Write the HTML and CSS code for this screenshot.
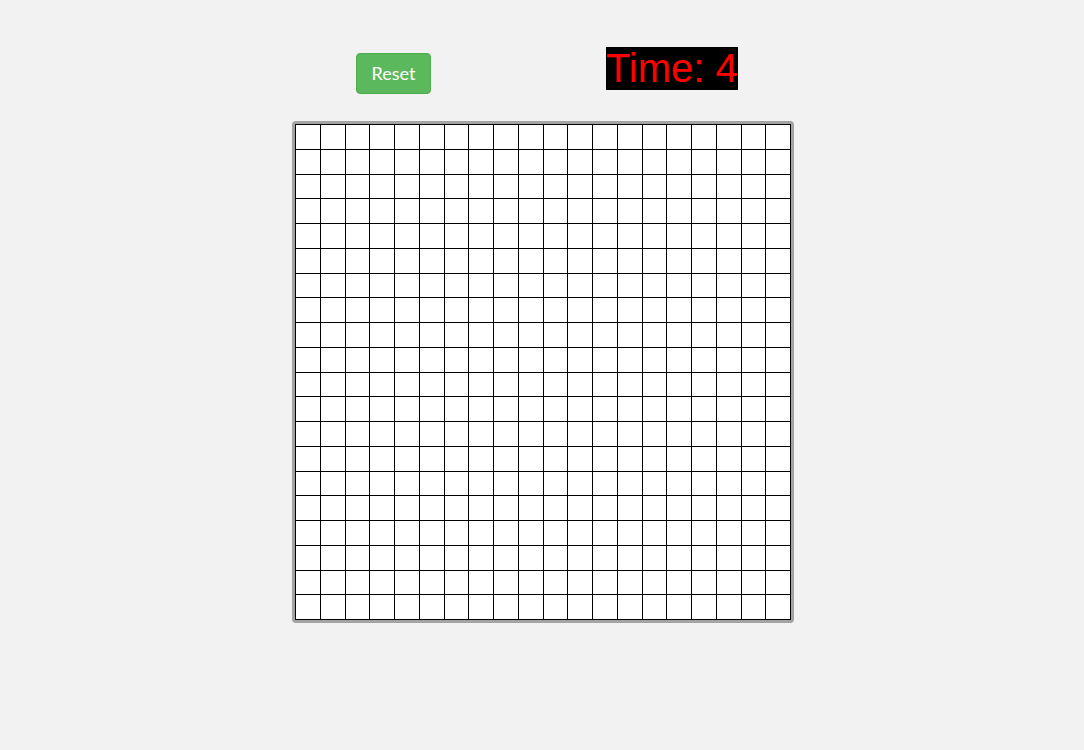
FILE: index.html
```html
<!DOCTYPE html>
<html>
<head>
<meta charset="utf-8">
<title>Grid</title>
<link rel="stylesheet" href="styles.css">
</head>
<body>
<div class="page">
  <div class="controls">
    <button class="reset-btn">Reset</button>
    <div class="timer">Time: 4</div>
  </div>
  <div class="board">
    <div class="grid">
      <span class="cell"></span><span class="cell"></span><span class="cell"></span><span class="cell"></span><span class="cell"></span><span class="cell"></span><span class="cell"></span><span class="cell"></span><span class="cell"></span><span class="cell"></span><span class="cell"></span><span class="cell"></span><span class="cell"></span><span class="cell"></span><span class="cell"></span><span class="cell"></span><span class="cell"></span><span class="cell"></span><span class="cell"></span><span class="cell"></span>
      <span class="cell"></span><span class="cell"></span><span class="cell"></span><span class="cell"></span><span class="cell"></span><span class="cell"></span><span class="cell"></span><span class="cell"></span><span class="cell"></span><span class="cell"></span><span class="cell"></span><span class="cell"></span><span class="cell"></span><span class="cell"></span><span class="cell"></span><span class="cell"></span><span class="cell"></span><span class="cell"></span><span class="cell"></span><span class="cell"></span>
      <span class="cell"></span><span class="cell"></span><span class="cell"></span><span class="cell"></span><span class="cell"></span><span class="cell"></span><span class="cell"></span><span class="cell"></span><span class="cell"></span><span class="cell"></span><span class="cell"></span><span class="cell"></span><span class="cell"></span><span class="cell"></span><span class="cell"></span><span class="cell"></span><span class="cell"></span><span class="cell"></span><span class="cell"></span><span class="cell"></span>
      <span class="cell"></span><span class="cell"></span><span class="cell"></span><span class="cell"></span><span class="cell"></span><span class="cell"></span><span class="cell"></span><span class="cell"></span><span class="cell"></span><span class="cell"></span><span class="cell"></span><span class="cell"></span><span class="cell"></span><span class="cell"></span><span class="cell"></span><span class="cell"></span><span class="cell"></span><span class="cell"></span><span class="cell"></span><span class="cell"></span>
      <span class="cell"></span><span class="cell"></span><span class="cell"></span><span class="cell"></span><span class="cell"></span><span class="cell"></span><span class="cell"></span><span class="cell"></span><span class="cell"></span><span class="cell"></span><span class="cell"></span><span class="cell"></span><span class="cell"></span><span class="cell"></span><span class="cell"></span><span class="cell"></span><span class="cell"></span><span class="cell"></span><span class="cell"></span><span class="cell"></span>
      <span class="cell"></span><span class="cell"></span><span class="cell"></span><span class="cell"></span><span class="cell"></span><span class="cell"></span><span class="cell"></span><span class="cell"></span><span class="cell"></span><span class="cell"></span><span class="cell"></span><span class="cell"></span><span class="cell"></span><span class="cell"></span><span class="cell"></span><span class="cell"></span><span class="cell"></span><span class="cell"></span><span class="cell"></span><span class="cell"></span>
      <span class="cell"></span><span class="cell"></span><span class="cell"></span><span class="cell"></span><span class="cell"></span><span class="cell"></span><span class="cell"></span><span class="cell"></span><span class="cell"></span><span class="cell"></span><span class="cell"></span><span class="cell"></span><span class="cell"></span><span class="cell"></span><span class="cell"></span><span class="cell"></span><span class="cell"></span><span class="cell"></span><span class="cell"></span><span class="cell"></span>
      <span class="cell"></span><span class="cell"></span><span class="cell"></span><span class="cell"></span><span class="cell"></span><span class="cell"></span><span class="cell"></span><span class="cell"></span><span class="cell"></span><span class="cell"></span><span class="cell"></span><span class="cell"></span><span class="cell"></span><span class="cell"></span><span class="cell"></span><span class="cell"></span><span class="cell"></span><span class="cell"></span><span class="cell"></span><span class="cell"></span>
      <span class="cell"></span><span class="cell"></span><span class="cell"></span><span class="cell"></span><span class="cell"></span><span class="cell"></span><span class="cell"></span><span class="cell"></span><span class="cell"></span><span class="cell"></span><span class="cell"></span><span class="cell"></span><span class="cell"></span><span class="cell"></span><span class="cell"></span><span class="cell"></span><span class="cell"></span><span class="cell"></span><span class="cell"></span><span class="cell"></span>
      <span class="cell"></span><span class="cell"></span><span class="cell"></span><span class="cell"></span><span class="cell"></span><span class="cell"></span><span class="cell"></span><span class="cell"></span><span class="cell"></span><span class="cell"></span><span class="cell"></span><span class="cell"></span><span class="cell"></span><span class="cell"></span><span class="cell"></span><span class="cell"></span><span class="cell"></span><span class="cell"></span><span class="cell"></span><span class="cell"></span>
      <span class="cell"></span><span class="cell"></span><span class="cell"></span><span class="cell"></span><span class="cell"></span><span class="cell"></span><span class="cell"></span><span class="cell"></span><span class="cell"></span><span class="cell"></span><span class="cell"></span><span class="cell"></span><span class="cell"></span><span class="cell"></span><span class="cell"></span><span class="cell"></span><span class="cell"></span><span class="cell"></span><span class="cell"></span><span class="cell"></span>
      <span class="cell"></span><span class="cell"></span><span class="cell"></span><span class="cell"></span><span class="cell"></span><span class="cell"></span><span class="cell"></span><span class="cell"></span><span class="cell"></span><span class="cell"></span><span class="cell"></span><span class="cell"></span><span class="cell"></span><span class="cell"></span><span class="cell"></span><span class="cell"></span><span class="cell"></span><span class="cell"></span><span class="cell"></span><span class="cell"></span>
      <span class="cell"></span><span class="cell"></span><span class="cell"></span><span class="cell"></span><span class="cell"></span><span class="cell"></span><span class="cell"></span><span class="cell"></span><span class="cell"></span><span class="cell"></span><span class="cell"></span><span class="cell"></span><span class="cell"></span><span class="cell"></span><span class="cell"></span><span class="cell"></span><span class="cell"></span><span class="cell"></span><span class="cell"></span><span class="cell"></span>
      <span class="cell"></span><span class="cell"></span><span class="cell"></span><span class="cell"></span><span class="cell"></span><span class="cell"></span><span class="cell"></span><span class="cell"></span><span class="cell"></span><span class="cell"></span><span class="cell"></span><span class="cell"></span><span class="cell"></span><span class="cell"></span><span class="cell"></span><span class="cell"></span><span class="cell"></span><span class="cell"></span><span class="cell"></span><span class="cell"></span>
      <span class="cell"></span><span class="cell"></span><span class="cell"></span><span class="cell"></span><span class="cell"></span><span class="cell"></span><span class="cell"></span><span class="cell"></span><span class="cell"></span><span class="cell"></span><span class="cell"></span><span class="cell"></span><span class="cell"></span><span class="cell"></span><span class="cell"></span><span class="cell"></span><span class="cell"></span><span class="cell"></span><span class="cell"></span><span class="cell"></span>
      <span class="cell"></span><span class="cell"></span><span class="cell"></span><span class="cell"></span><span class="cell"></span><span class="cell"></span><span class="cell"></span><span class="cell"></span><span class="cell"></span><span class="cell"></span><span class="cell"></span><span class="cell"></span><span class="cell"></span><span class="cell"></span><span class="cell"></span><span class="cell"></span><span class="cell"></span><span class="cell"></span><span class="cell"></span><span class="cell"></span>
      <span class="cell"></span><span class="cell"></span><span class="cell"></span><span class="cell"></span><span class="cell"></span><span class="cell"></span><span class="cell"></span><span class="cell"></span><span class="cell"></span><span class="cell"></span><span class="cell"></span><span class="cell"></span><span class="cell"></span><span class="cell"></span><span class="cell"></span><span class="cell"></span><span class="cell"></span><span class="cell"></span><span class="cell"></span><span class="cell"></span>
      <span class="cell"></span><span class="cell"></span><span class="cell"></span><span class="cell"></span><span class="cell"></span><span class="cell"></span><span class="cell"></span><span class="cell"></span><span class="cell"></span><span class="cell"></span><span class="cell"></span><span class="cell"></span><span class="cell"></span><span class="cell"></span><span class="cell"></span><span class="cell"></span><span class="cell"></span><span class="cell"></span><span class="cell"></span><span class="cell"></span>
      <span class="cell"></span><span class="cell"></span><span class="cell"></span><span class="cell"></span><span class="cell"></span><span class="cell"></span><span class="cell"></span><span class="cell"></span><span class="cell"></span><span class="cell"></span><span class="cell"></span><span class="cell"></span><span class="cell"></span><span class="cell"></span><span class="cell"></span><span class="cell"></span><span class="cell"></span><span class="cell"></span><span class="cell"></span><span class="cell"></span>
      <span class="cell"></span><span class="cell"></span><span class="cell"></span><span class="cell"></span><span class="cell"></span><span class="cell"></span><span class="cell"></span><span class="cell"></span><span class="cell"></span><span class="cell"></span><span class="cell"></span><span class="cell"></span><span class="cell"></span><span class="cell"></span><span class="cell"></span><span class="cell"></span><span class="cell"></span><span class="cell"></span><span class="cell"></span><span class="cell"></span>
    </div>
  </div>
</div>
</body>
</html>
```
FILE: styles.css
```css
html, body {
  margin: 0;
  padding: 0;
  background: #f2f2f2;
}

.page {
  display: flex;
  flex-direction: column;
  align-items: center;
  padding-top: 47px;
  padding-left: 2px;
}

.controls {
  width: 502px;
  box-sizing: border-box;
  display: flex;
  align-items: flex-start;
  padding-left: 64px;
  gap: 175px;
}

.reset-btn {
  margin-top: 6px;
  font-family: Lato, "Liberation Sans", sans-serif;
  font-size: 18px;
  line-height: 23px;
  padding: 8px 14.5px;
  color: #fff;
  background: #5cb85c;
  border: 1px solid #4cae4c;
  border-radius: 4px;
  cursor: pointer;
}

.timer {
  font-family: "Liberation Sans", Arial, sans-serif;
  font-size: 40px;
  line-height: 43px;
  color: #ff0000;
  background: #000;
  white-space: nowrap;
}

.board {
  margin-top: 27px;
  width: 496px;
  height: 496px;
  border: 3px solid #a3a3a3;
  border-radius: 4px;
  background: #fff;
}

.grid {
  box-sizing: border-box;
  width: 100%;
  height: 100%;
  display: grid;
  grid-template-columns: repeat(20, 1fr);
  grid-template-rows: repeat(20, 1fr);
  border-top: 1px solid #000;
  border-left: 1px solid #000;
}

.cell {
  display: block;
  background: #fff;
  border-right: 1px solid #000;
  border-bottom: 1px solid #000;
}
```
